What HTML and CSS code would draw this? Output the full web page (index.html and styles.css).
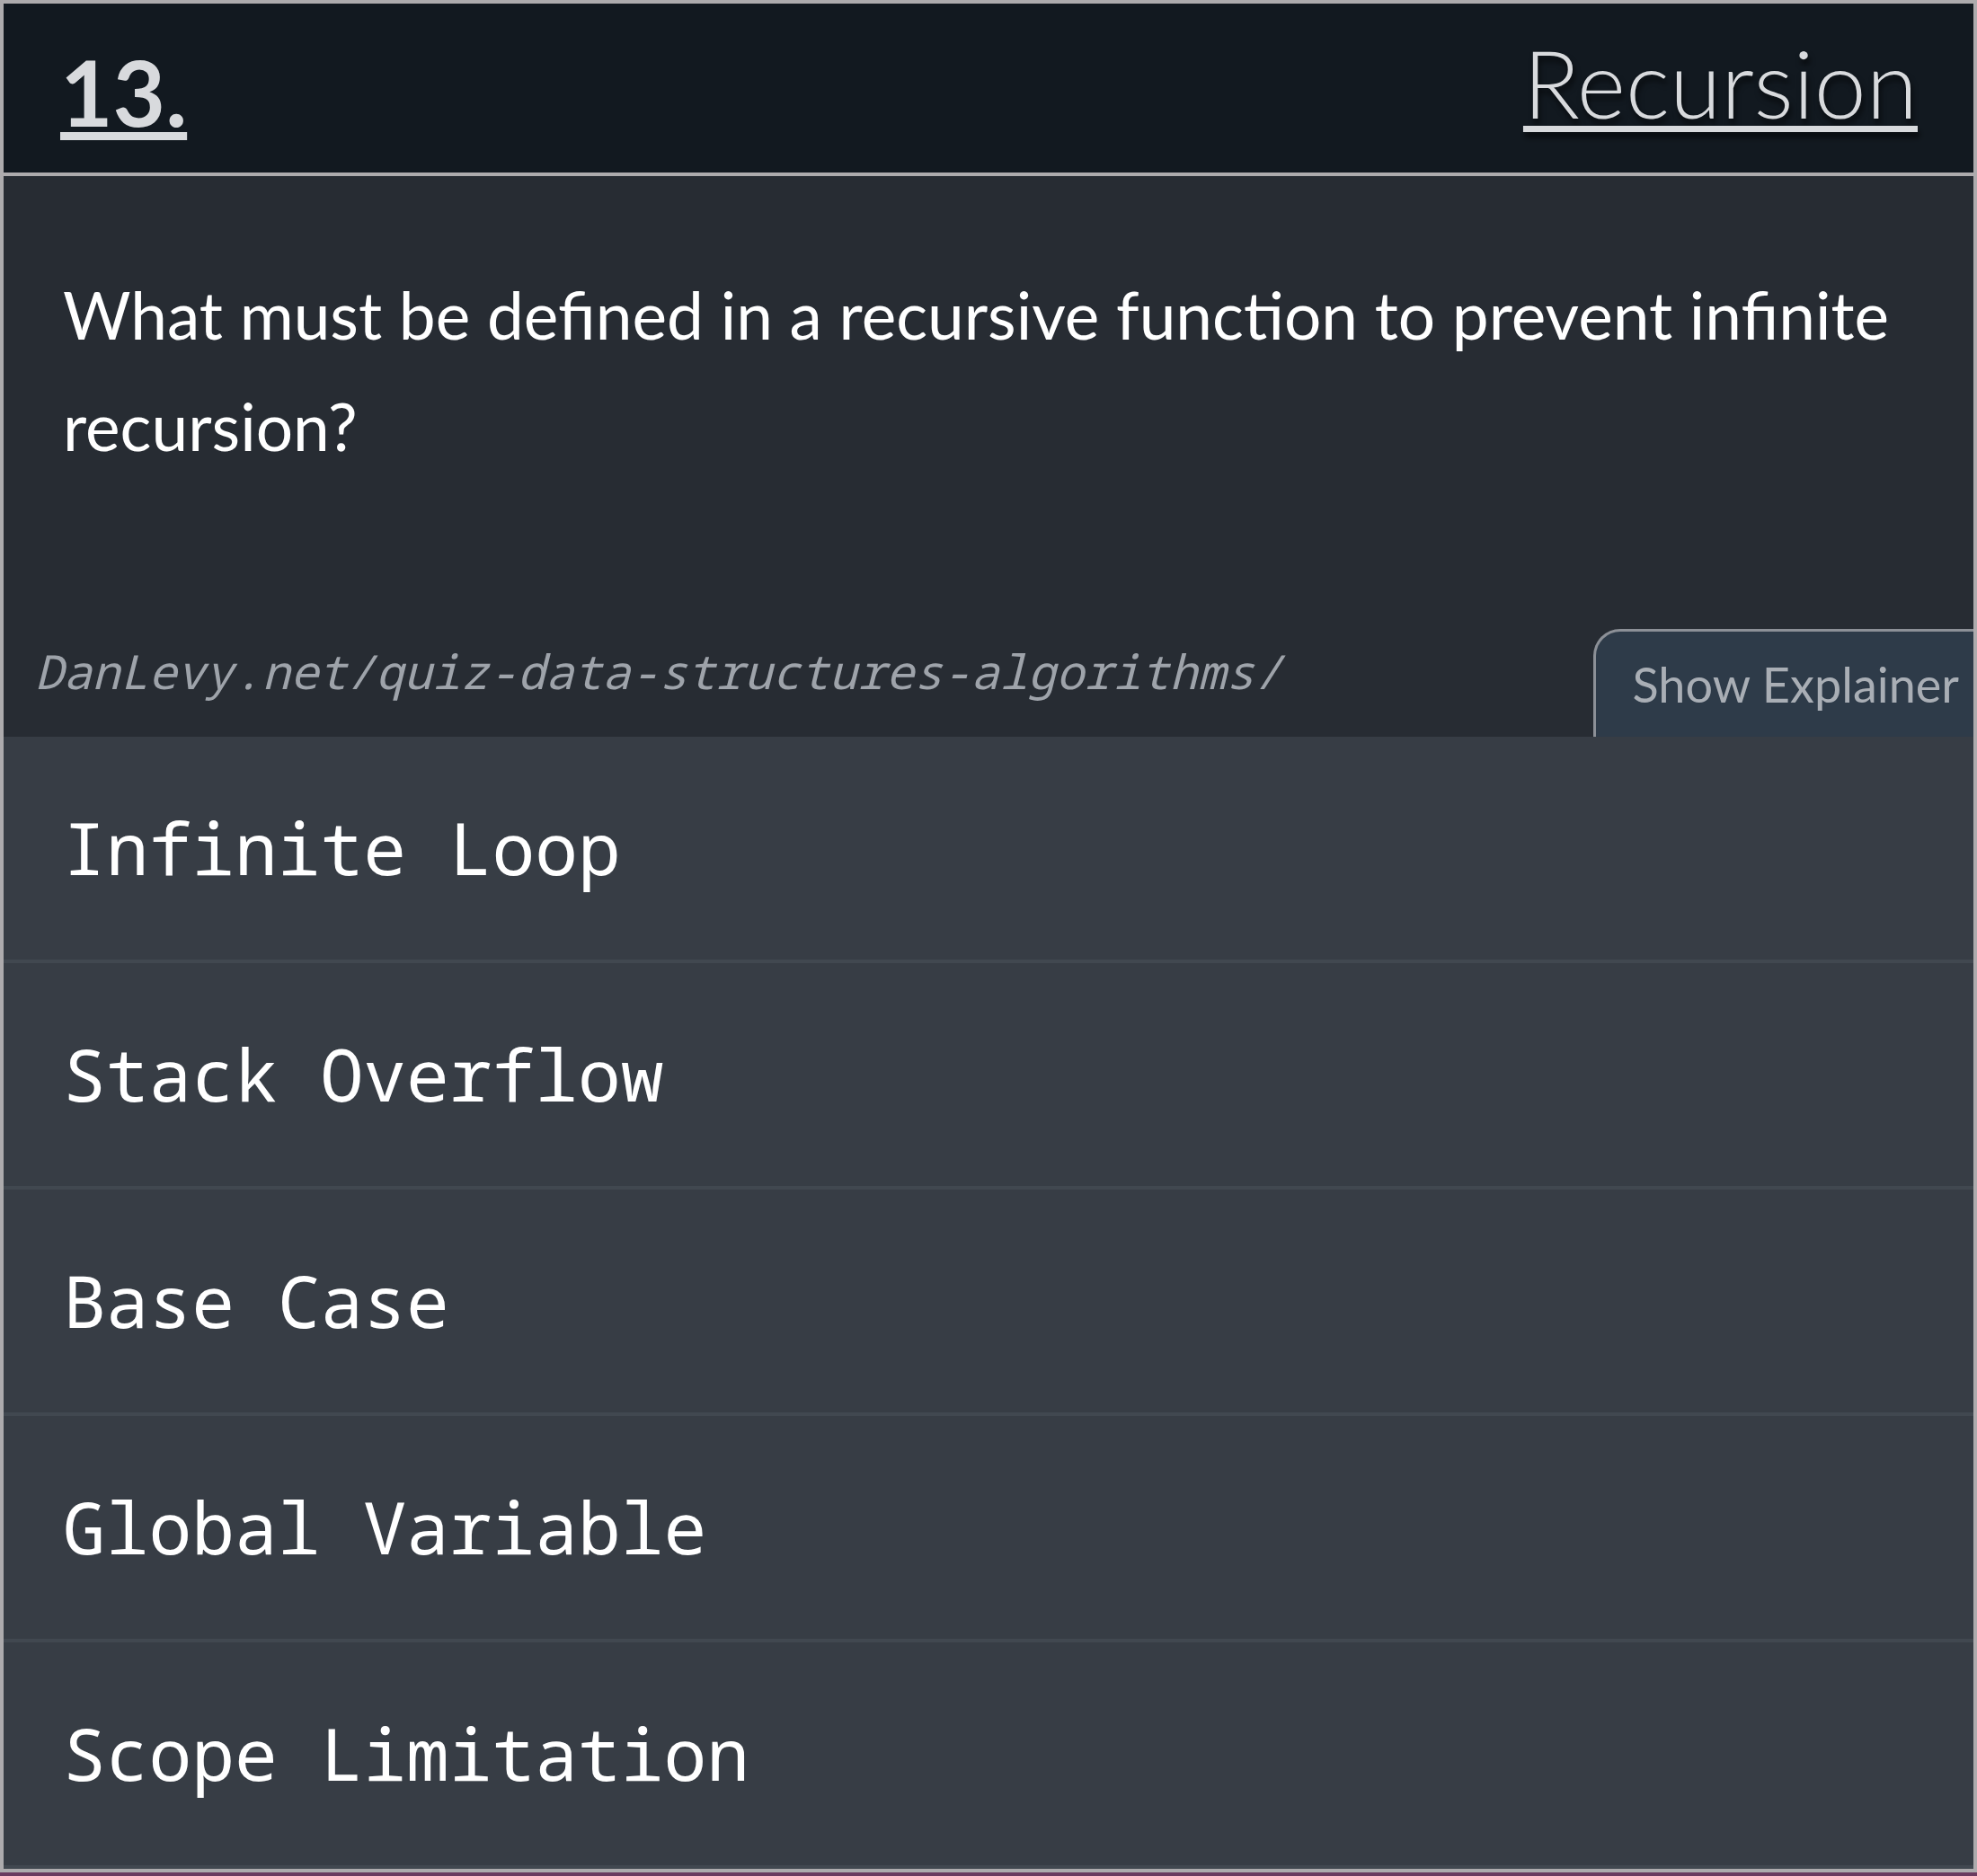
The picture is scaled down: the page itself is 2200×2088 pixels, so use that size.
FILE: index.html
```html
<!DOCTYPE html>
<html lang="en">
<head>
<meta charset="utf-8">
<title>Quiz 13 – Recursion</title>
<link rel="stylesheet" href="styles.css">
</head>
<body>
<div class="card">
  <header class="head">
    <a class="num" href="#q13">13.</a>
    <a class="topic" href="#recursion">Recursion</a>
  </header>
  <section class="prompt">
    <p class="question">What must be defined in a recursive function to prevent infinite recursion?</p>
    <div class="meta">
      <span class="url">DanLevy.net/quiz-data-structures-algorithms/</span>
      <button class="explain" type="button">Show Explainer</button>
    </div>
  </section>
  <ul class="options">
    <li class="option">Infinite Loop</li>
    <li class="option">Stack Overflow</li>
    <li class="option">Base Case</li>
    <li class="option">Global Variable</li>
    <li class="option">Scope Limitation</li>
  </ul>
</div>
</body>
</html>
```
FILE: styles.css
```css
html, body {
  margin: 0;
  padding: 0;
}
body {
  background: #6b3a5f;
  font-family: Lato, "Open Sans", "Noto Sans", sans-serif;
}
.card {
  border: 4px solid #adabad;
  background: #373d45;
  display: flex;
  flex-direction: column;
}
.head {
  height: 188px;
  background: #121920;
  border-bottom: 4px solid #adabad;
  display: flex;
  justify-content: space-between;
  align-items: flex-start;
  padding: 0 62px 0 63px;
}
.num {
  color: #d8dadd;
  font-weight: 700;
  font-size: 101px;
  line-height: 1;
  margin-top: 48px;
  text-decoration: underline;
  text-decoration-thickness: 9px;
  text-underline-offset: 6px;
}
.topic {
  color: #d8dadd;
  font-weight: 300;
  font-size: 104px;
  line-height: 1;
  margin-top: 36px;
  text-decoration: underline;
  text-decoration-thickness: 7px;
  text-underline-offset: 8px;
  text-shadow: 2px 6px 6px rgba(0, 0, 0, 0.6);
}
.prompt {
  height: 624px;
  background: #272c33;
  display: flex;
  flex-direction: column;
  justify-content: space-between;
}
.question {
  margin: 0;
  padding: 92px 64px 0 66px;
  color: #ffffff;
  font-size: 73px;
  line-height: 124px;
}
.meta {
  height: 120px;
  display: flex;
  justify-content: space-between;
  align-items: stretch;
}
.url {
  padding-left: 35px;
  padding-top: 17px;
  font-family: "Noto Sans Mono", "DejaVu Sans Mono", monospace;
  font-style: italic;
  font-size: 52.6px;
  line-height: 60px;
  color: #9ea3aa;
}
.explain {
  background: #2e3b49;
  border: 3px solid #8c9097;
  border-right: none;
  border-bottom: none;
  border-top-left-radius: 30px;
  padding: 0 16px 0 40px;
  margin: 0;
  color: #a9aeb5;
  font-family: Lato, "Open Sans", sans-serif;
  font-size: 54px;
  line-height: 1;
  display: flex;
  align-items: center;
}
.options {
  list-style: none;
  margin: 0;
  padding: 0;
}
.option {
  height: 248px;
  border-bottom: 4px solid #414850;
  display: flex;
  align-items: center;
  padding-left: 66px;
  color: #ffffff;
  font-family: "Noto Sans Mono", "DejaVu Sans Mono", monospace;
  font-size: 79.6px;
  line-height: 1;
}
```
